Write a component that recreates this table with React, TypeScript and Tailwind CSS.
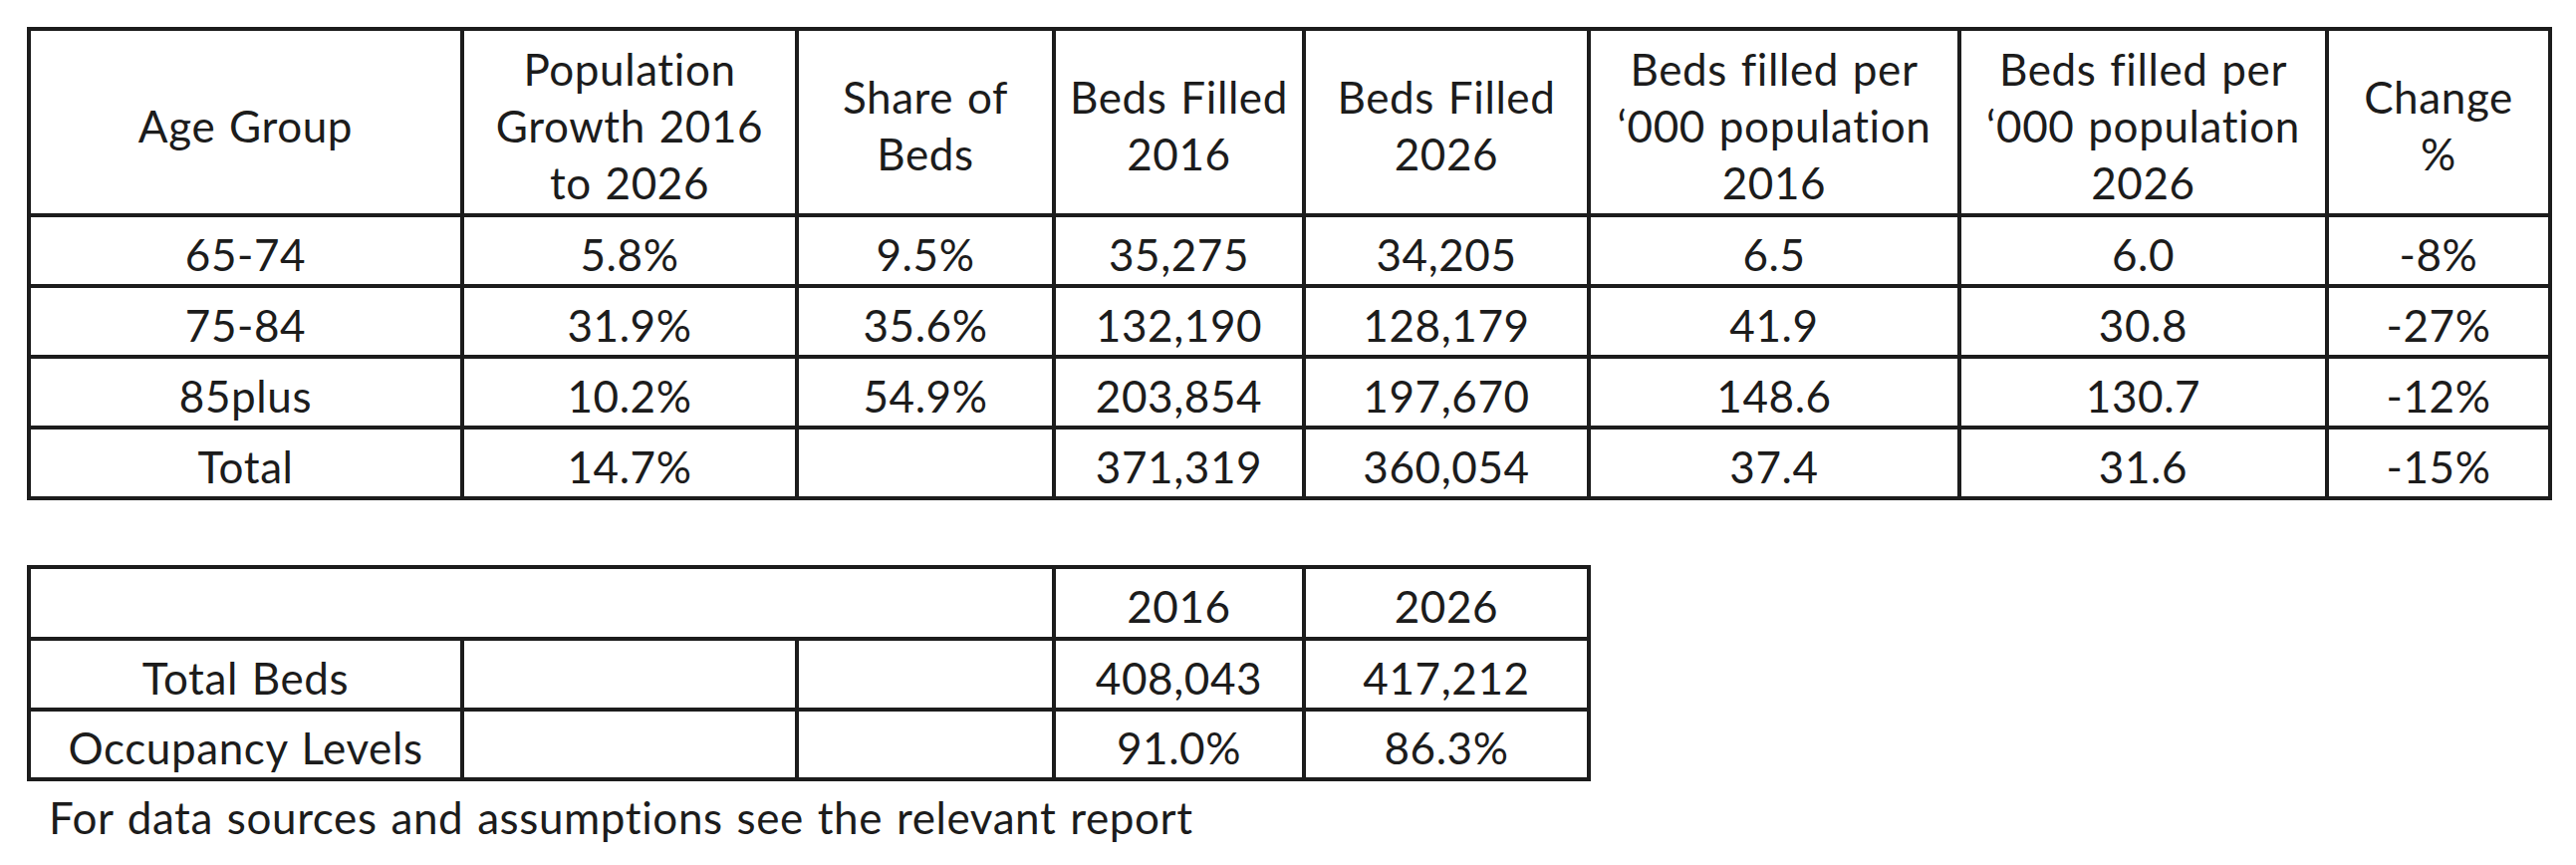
import React from "react";

const F = { fontFamily: "Lato, 'Open Sans', sans-serif" };

const cell =
  "border-r-4 border-b-4 border-[#1c1c1c] text-center align-middle px-0 pb-0 pt-[7px] whitespace-nowrap";

const widths = [
  "w-[435px]",
  "w-[336px]",
  "w-[258px]",
  "w-[251px]",
  "w-[286px]",
  "w-[372px]",
  "w-[369px]",
  "w-[224px]",
];

const headers: React.ReactNode[] = [
  <>Age Group</>,
  <>
    Population
    <br />
    Growth 2016
    <br />
    to 2026
  </>,
  <>
    Share of
    <br />
    Beds
  </>,
  <>
    Beds Filled
    <br />
    2016
  </>,
  <>
    Beds Filled
    <br />
    2026
  </>,
  <>
    Beds filled per
    <br />
    ‘000 population
    <br />
    2016
  </>,
  <>
    Beds filled per
    <br />
    ‘000 population
    <br />
    2026
  </>,
  <>
    Change
    <br />%
  </>,
];

const rows: string[][] = [
  ["65-74", "5.8%", "9.5%", "35,275", "34,205", "6.5", "6.0", "-8%"],
  ["75-84", "31.9%", "35.6%", "132,190", "128,179", "41.9", "30.8", "-27%"],
  ["85plus", "10.2%", "54.9%", "203,854", "197,670", "148.6", "130.7", "-12%"],
  ["Total", "14.7%", "", "371,319", "360,054", "37.4", "31.6", "-15%"],
];

export default function App() {
  return (
    <div
      className="w-[2586px] h-[868px] bg-white text-[#1c1c1c] pl-[27px] pt-[27px] text-[44px] leading-[57px] tracking-[0.6px] [word-spacing:2px]"
      style={F}
    >
      <table className="border-separate border-spacing-0 border-l-4 border-t-4 border-[#1c1c1c] table-fixed">
        <tbody>
          <tr className="h-[187px]">
            {headers.map((h, i) => (
              <td key={i} className={`${cell} ${widths[i]}`}>
                {h}
              </td>
            ))}
          </tr>
          {rows.map((r, ri) => (
            <tr key={ri} className="h-[71px]">
              {r.map((v, i) => (
                <td key={i} className={`${cell} ${widths[i]}`}>
                  {v}
                </td>
              ))}
            </tr>
          ))}
        </tbody>
      </table>

      <table className="mt-[65px] border-separate border-spacing-0 border-l-4 border-t-4 border-[#1c1c1c] table-fixed">
        <tbody>
          <tr className="h-[72px]">
            <td colSpan={3} className={`${cell} w-[1029px]`}></td>
            <td className={`${cell} w-[251px]`}>2016</td>
            <td className={`${cell} w-[286px]`}>2026</td>
          </tr>
          <tr className="h-[71px]">
            <td className={`${cell} w-[435px]`}>Total Beds</td>
            <td className={`${cell} w-[336px]`}></td>
            <td className={`${cell} w-[258px]`}></td>
            <td className={`${cell} w-[251px]`}>408,043</td>
            <td className={`${cell} w-[286px]`}>417,212</td>
          </tr>
          <tr className="h-[70px]">
            <td className={`${cell} w-[435px]`}>Occupancy Levels</td>
            <td className={`${cell} w-[336px]`}></td>
            <td className={`${cell} w-[258px]`}></td>
            <td className={`${cell} w-[251px]`}>91.0%</td>
            <td className={`${cell} w-[286px]`}>86.3%</td>
          </tr>
        </tbody>
      </table>

      <p className="pl-[22px] mt-[8px] whitespace-nowrap">
        For data sources and assumptions see the relevant report
      </p>
    </div>
  );
}
